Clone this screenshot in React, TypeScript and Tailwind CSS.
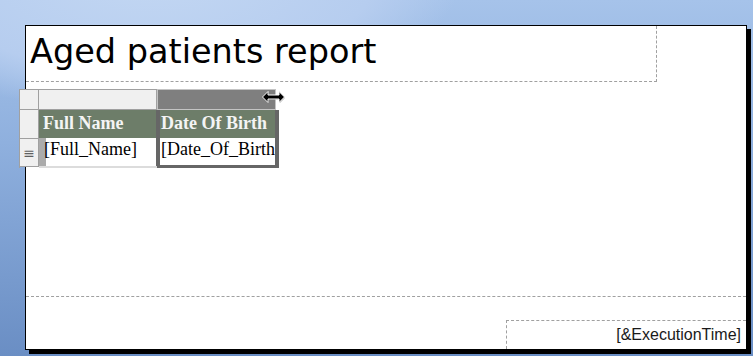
import React from "react";

function ResizeCursor() {
  return (
    <svg width="26" height="14" viewBox="0 0 26 14" className="absolute left-[261px] top-[90px]">
      <path d="M3 8 L8 3 L8 6 L19 6 L19 3 L24 8 L19 13 L19 10 L8 10 L8 13 Z" fill="#000" opacity="0.25" />
      <path d="M1.5 7 L7 1.5 L7 5 L18 5 L18 1.5 L23.5 7 L18 12.5 L18 9 L7 9 L7 12.5 Z" fill="#000" stroke="#fff" strokeWidth="1" />
    </svg>
  );
}

export default function App() {
  return (
    <div className="relative h-[356px] w-[753px] overflow-hidden bg-[radial-gradient(ellipse_420px_200px_at_20%_-10%,#c4d8f3_0%,#b6cdef_55%,transparent_75%),linear-gradient(180deg,#a6c3ea_0%,#8fb0de_40%,#6a8ec4_100%)] pl-[25px] pt-[25px]">
      <div className="relative flex h-[325px] w-[722px] flex-col border border-black bg-white shadow-[4px_4px_0_#000]">
        {/* body */}
        <div className="flex h-[270px] flex-col">
          <div className="h-[56px] w-[631px] border-b border-r border-dashed border-[#a0a0a0] pl-[4px] pt-[9px]">
            <div className="text-[33.5px] leading-[33px] text-black" style={{ fontFamily: '"DejaVu Sans", Verdana, sans-serif' }}>
              Aged patients report
            </div>
          </div>

          <div className="ml-[-7px] mt-[7px] flex" style={{ fontFamily: '"Liberation Serif", "Times New Roman", serif' }}>
            {/* handle column */}
            <div className="flex w-[20px] flex-col border-l border-t border-[#a0a0a0]">
              <div className="h-[20px] border-b border-r border-[#a0a0a0] bg-[#f0f0f0]" />
              <div className="h-[29px] border-b border-r border-[#a0a0a0] bg-[#f0f0f0]" />
              <div className="flex h-[28px] items-center justify-center border-b border-r border-[#a0a0a0] bg-[#f0f0f0] text-[14px] leading-none text-[#606060]" style={{ fontFamily: '"DejaVu Sans", sans-serif' }}>
                ≡
              </div>
            </div>

            {/* column 1 */}
            <div className="flex w-[118px] flex-col">
              <div className="h-[21px] border-b border-r border-t border-[#a0a0a0] bg-[#f0f0f0]" />
              <div className="h-[28px] bg-[#6d7d69] pl-[4px] pt-[3px] text-[18px] font-bold leading-[20px] text-[#f4f4f4]">
                Full Name
              </div>
              <div className="relative h-[30px] border-b-2 border-[#dcdcdc] pl-[5px] pt-[1px] text-[18px] leading-[20px] text-black">
                <div className="absolute bottom-0 left-0 top-0 w-[7px] bg-[#ababab]" />
                <span className="relative">[Full_Name]</span>
              </div>
            </div>

            {/* column 2, selected */}
            <div className="ml-[-1px] flex w-[123px] flex-col">
              <div className="ml-[1px] h-[21px] w-[119px] border border-[#c4c4c4] bg-[#7f7f7f]" />
              <div className="flex flex-col border-x-[4px] border-b-[3px] border-[#666666]">
                <div className="h-[28px] overflow-hidden whitespace-nowrap bg-[#6d7d69] pl-[1px] pt-[3px] text-[18px] font-bold leading-[20px] text-[#f4f4f4]">
                  Date Of Birth
                </div>
                <div className="h-[27px] overflow-hidden whitespace-nowrap bg-white pl-[1px] pt-[1px] text-[18px] leading-[20px] text-black">
                  [Date_Of_Birth]
                </div>
              </div>
            </div>
          </div>
        </div>

        {/* footer */}
        <div className="flex h-[53px] flex-col border-t border-dashed border-[#a0a0a0]">
          <div className="ml-auto mt-[23px] h-[29px] w-[240px] border-l border-t border-dashed border-[#a0a0a0] pr-[5px] pt-[5px] text-right text-[16px] leading-[18px] text-[#1a1a1a]" style={{ fontFamily: '"Liberation Sans", Arial, sans-serif' }}>
            [&amp;ExecutionTime]
          </div>
        </div>
      </div>
      <ResizeCursor />
    </div>
  );
}
